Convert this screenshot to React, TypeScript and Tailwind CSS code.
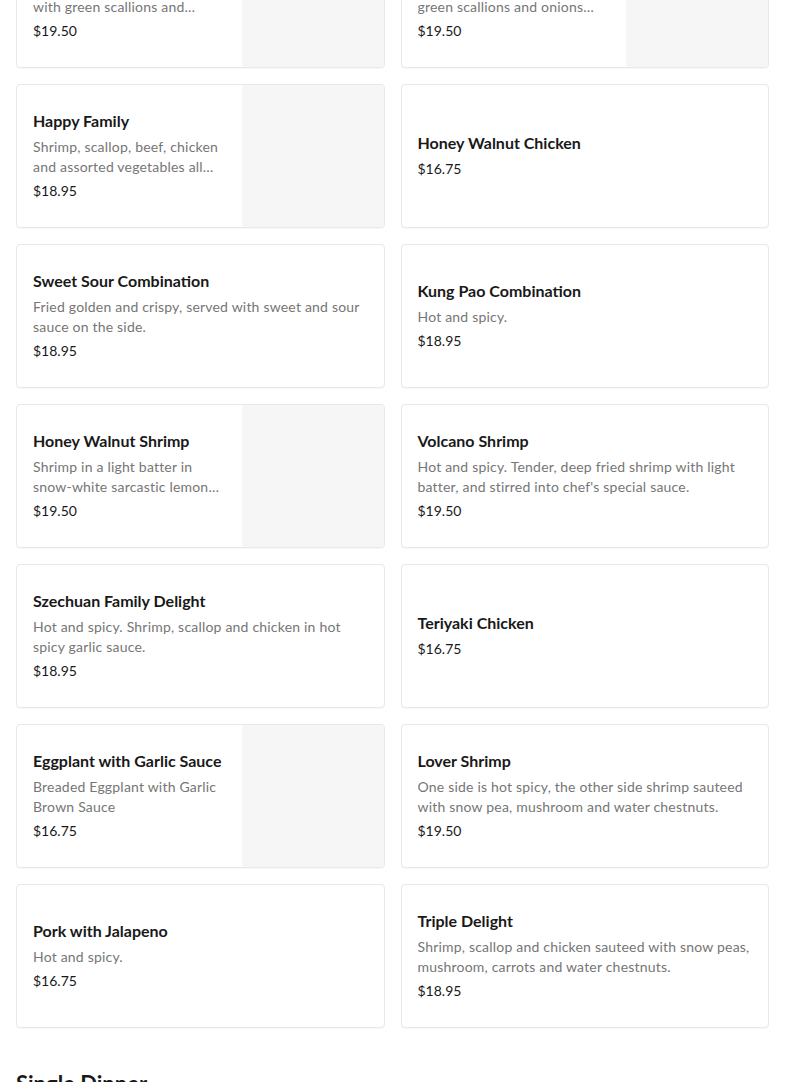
type Item = {
  name: string;
  desc?: string;
  price: string;
  image?: boolean;
};

const items: Item[] = [
  {
    name: 'Mongolian Combination',
    desc: 'Shrimp, scallop, beef, chicken with green scallions and onions in brown sauce.',
    price: '$19.50',
    image: true,
  },
  {
    name: 'Mongolian Shrimp',
    desc: 'Sauteed jumbo shrimp with green scallions and onions sauteed in brown sauce.',
    price: '$19.50',
    image: true,
  },
  {
    name: 'Happy Family',
    desc: 'Shrimp, scallop, beef, chicken and assorted vegetables all sauteed in brown sauce.',
    price: '$18.95',
    image: true,
  },
  { name: 'Honey Walnut Chicken', price: '$16.75' },
  {
    name: 'Sweet Sour Combination',
    desc: 'Fried golden and crispy, served with sweet and sour sauce on the side.',
    price: '$18.95',
  },
  { name: 'Kung Pao Combination', desc: 'Hot and spicy.', price: '$18.95' },
  {
    name: 'Honey Walnut Shrimp',
    desc: 'Shrimp in a light batter in snow-white sarcastic lemon sauce with honey walnuts.',
    price: '$19.50',
    image: true,
  },
  {
    name: 'Volcano Shrimp',
    desc: "Hot and spicy. Tender, deep fried shrimp with light batter, and stirred into chef's special sauce.",
    price: '$19.50',
  },
  {
    name: 'Szechuan Family Delight',
    desc: 'Hot and spicy. Shrimp, scallop and chicken in hot spicy garlic sauce.',
    price: '$18.95',
  },
  { name: 'Teriyaki Chicken', price: '$16.75' },
  {
    name: 'Eggplant with Garlic Sauce',
    desc: 'Breaded Eggplant with Garlic Brown Sauce',
    price: '$16.75',
    image: true,
  },
  {
    name: 'Lover Shrimp',
    desc: 'One side is hot spicy, the other side shrimp sauteed with snow pea, mushroom and water chestnuts.',
    price: '$19.50',
  },
  { name: 'Pork with Jalapeno', desc: 'Hot and spicy.', price: '$16.75' },
  {
    name: 'Triple Delight',
    desc: 'Shrimp, scallop and chicken sauteed with snow peas, mushroom, carrots and water chestnuts.',
    price: '$18.95',
  },
];

function MenuCard({ item }: { item: Item }) {
  return (
    <div className="flex h-[144px] overflow-hidden rounded border border-[#e8e8e8] bg-white shadow-[0_1px_1px_rgba(0,0,0,0.03)]">
      <div className="flex min-w-0 flex-1 flex-col justify-center px-4 pb-[2px]">
        <div className="text-base font-bold leading-6 text-[#191919]">{item.name}</div>
        {item.desc && (
          <div className="mt-1 line-clamp-2 text-sm leading-5 tracking-[0.2px] text-[#767676]">
            {item.desc}
          </div>
        )}
        <div className="mt-1 text-sm leading-5 text-[#191919]">{item.price}</div>
      </div>
      {item.image && <div className="w-[142px] shrink-0 bg-[#f6f6f6]" />}
    </div>
  );
}

export default function App() {
  return (
    <div
      className="min-h-screen overflow-hidden bg-white"
      style={{ fontFamily: 'Lato, "Noto Sans", sans-serif' }}
    >
      <div className="-mt-[76px] px-4 pb-10">
        <div className="grid grid-cols-2 gap-4">
          {items.map((item) => (
            <MenuCard key={item.name} item={item} />
          ))}
        </div>

        <h2 className="mt-[40px] text-[22px] font-bold leading-8 text-[#191919]">Single Dinner</h2>
      </div>
    </div>
  );
}
